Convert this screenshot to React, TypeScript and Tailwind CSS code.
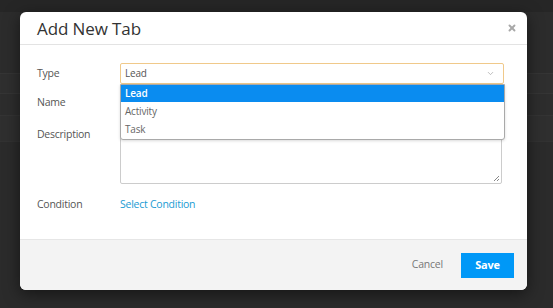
import React from 'react';
import { X, ChevronDown } from 'lucide-react';

const OPTIONS = ['Lead', 'Activity', 'Task'];

// Rows of the page that sits behind the overlay
const BackgroundRows: React.FC = () => (
  <div className="flex flex-col w-full h-full">
    <div className="h-[12px] bg-[#262626]" />
    <div className="h-[61px] bg-[#2c2c2c]" />
    <div className="h-[20px] bg-[#2f2f2f] border-t border-[#353535]" />
    <div className="h-[22px] bg-[#2d2d2d] border-t border-[#353535]" />
    <div className="h-[26px] bg-[#2f2f2f] border-t border-[#343434]" />
    <div className="flex-1 bg-[#2b2b2b] border-t border-[#323232]" />
  </div>
);

const Label: React.FC<{ children: React.ReactNode; className?: string }> = ({ children, className }) => (
  <div className={`w-[83px] shrink-0 text-[10.5px] tracking-[-0.25px] text-[#555] ${className ?? ''}`}>{children}</div>
);

export default function App() {
  return (
    <div
      className="relative w-[553px] h-[308px] overflow-hidden bg-[#2b2b2b]"
      style={{ fontFamily: '"Open Sans", "Noto Sans", sans-serif' }}
    >
      <BackgroundRows />

      {/* Modal */}
      <div className="absolute left-[20px] top-[12px] w-[507px] h-[278px] bg-white rounded-[6px] shadow-[0_4px_16px_rgba(0,0,0,0.5)] flex flex-col">
        {/* Header */}
        <div className="h-[33px] flex items-center justify-between pl-[17px] pr-[10px] border-b border-[#e3e3e3]">
          <h2 className="text-[17px] leading-none text-[#333] font-medium tracking-[-0.1px]">Add New Tab</h2>
          <X className="w-[10px] h-[10px] text-[#a8a8a8]" strokeWidth={4.5} />
        </div>

        {/* Body */}
        <div className="flex-1 flex flex-col pl-[17px] pr-[23px] pt-[18px]">
          {/* Type */}
          <div className="flex items-center">
            <Label>Type</Label>
            <div className="relative flex-1">
              <div className="h-[21px] border border-[#f0c98a] rounded-[2px] flex items-center justify-between pl-[4px] pr-[8px] text-[10px] tracking-[-0.2px] text-[#555]">
                <span>Lead</span>
                <ChevronDown className="w-[9px] h-[9px] text-[#aaa]" strokeWidth={2} />
              </div>
              {/* Open dropdown list */}
              <div className="absolute left-0 right-[-1px] top-[21px] z-10 bg-white border border-[#a9a9a9] rounded-b-[3px] shadow-[0_1px_3px_rgba(0,0,0,0.15)] flex flex-col text-[10px] tracking-[-0.2px] pb-[1px]">
                {OPTIONS.map((o, i) => (
                  <div
                    key={o}
                    className={
                      i === 0
                        ? 'h-[17px] flex items-center pl-[4px] bg-[#0a8cf0] text-white font-semibold'
                        : 'h-[18px] flex items-center pl-[4px] text-[#666]'
                    }
                  >
                    {o}
                  </div>
                ))}
              </div>
            </div>
          </div>

          {/* Name */}
          <div className="flex items-center mt-[8px]">
            <Label>Name</Label>
            <div className="flex-1 h-[21px] border border-[#ccc] rounded-[2px]" />
          </div>

          {/* Description */}
          <div className="flex items-start mt-[8px]">
            <Label className="pt-[6px]">Description</Label>
            <div className="relative w-[382px] h-[63px] border border-[#ccc] rounded-[2px]">
              <svg className="absolute right-[1px] bottom-[1px]" width="8" height="8" viewBox="0 0 8 8">
                <path d="M7 2 L2 7 M7 5 L5 7" stroke="#888" strokeWidth="1" />
              </svg>
            </div>
          </div>

          {/* Condition */}
          <div className="flex items-center mt-[13px]">
            <Label>Condition</Label>
            <a className="text-[10.5px] tracking-[-0.25px] text-[#1a9bd3] cursor-pointer">Select Condition</a>
          </div>
        </div>

        {/* Footer */}
        <div className="h-[51px] bg-[#f3f3f3] border-t border-[#e6e6e6] rounded-b-[6px] flex items-center justify-end pr-[13px] gap-[18px]">
          <button className="text-[10.5px] tracking-[-0.2px] text-[#777]">Cancel</button>
          <button className="w-[53px] h-[25px] bg-[#0098f7] text-white text-[11px] font-bold tracking-[-0.2px]">Save</button>
        </div>
      </div>
    </div>
  );
}
